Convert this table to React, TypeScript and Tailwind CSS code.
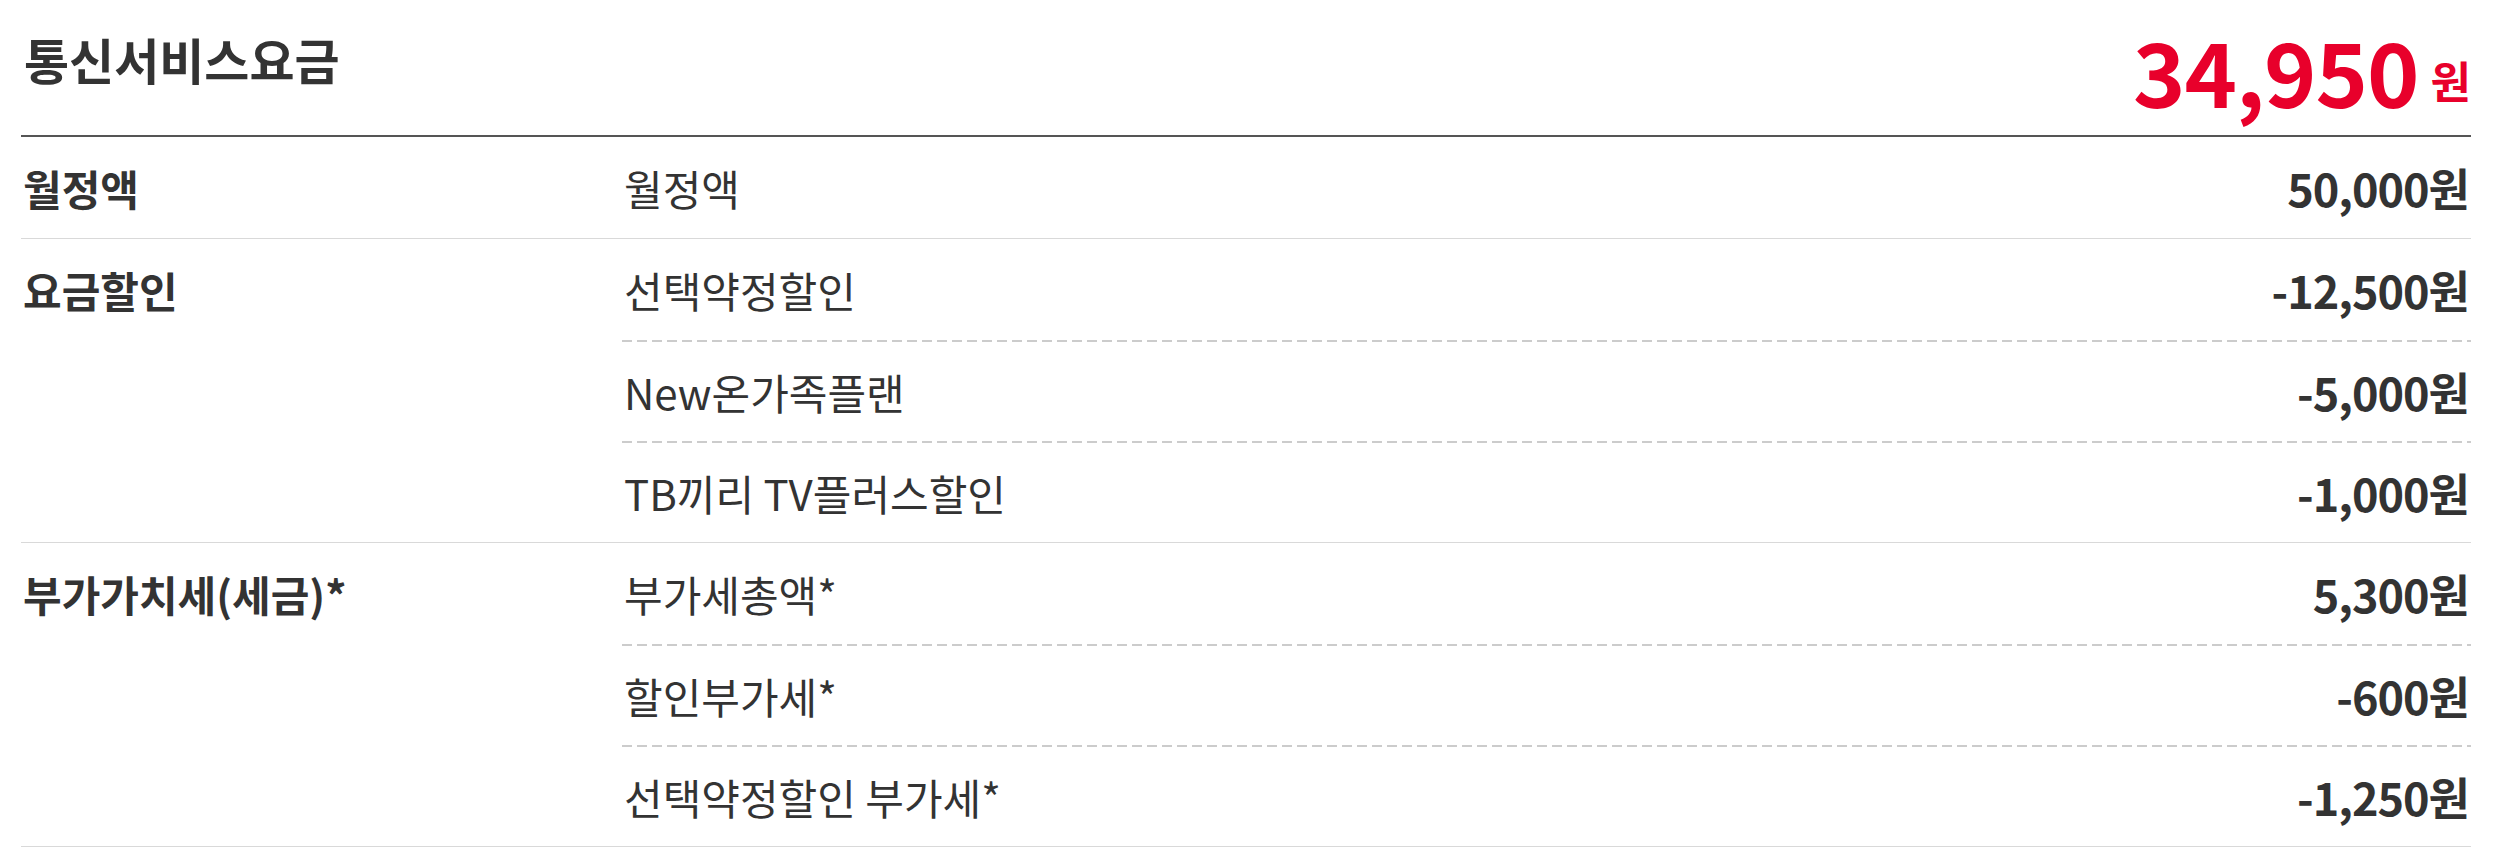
import React from 'react'

type Item = { name: string; amount: string }
type Group = { label: string; items: Item[] }

const groups: Group[] = [
  { label: '월정액', items: [{ name: '월정액', amount: '50,000원' }] },
  {
    label: '요금할인',
    items: [
      { name: '선택약정할인', amount: '-12,500원' },
      { name: 'New온가족플랜', amount: '-5,000원' },
      { name: 'TB끼리 TV플러스할인', amount: '-1,000원' },
    ],
  },
  {
    label: '부가가치세(세금)*',
    items: [
      { name: '부가세총액*', amount: '5,300원' },
      { name: '할인부가세*', amount: '-600원' },
      { name: '선택약정할인 부가세*', amount: '-1,250원' },
    ],
  },
]

function Dashed() {
  return (
    <div className="h-[2px] bg-[linear-gradient(to_right,#cccccc_10px,transparent_10px)] bg-[length:15px_2px] bg-repeat-x" />
  )
}

function FeeGroup({ group }: { group: Group }) {
  return (
    <div className="flex border-b border-[#d9d9d9]">
      <div className="w-[601px] h-[101px] flex items-center pl-[2px] text-[42px] font-bold leading-none">
        {group.label}
      </div>
      <div className="flex-1">
        {group.items.map((item, i) => (
          <div key={item.name}>
            {i > 0 && <Dashed />}
            <div
              className={`flex items-center justify-between ${i === 0 ? 'h-[101px]' : 'h-[99px]'}`}
            >
              <span className="pl-[2px] text-[42px] leading-none">{item.name}</span>
              <span className="pr-[2px] text-[45px] font-bold leading-none tracking-[-1px]">
                {item.amount}
              </span>
            </div>
          </div>
        ))}
      </div>
    </div>
  )
}

export default function App() {
  return (
    <div className="min-h-screen bg-white font-['Noto_Sans_CJK_KR',sans-serif] text-[#333333]">
      <div className="ml-[21px] w-[2450px]">
        <div className="flex justify-between h-[137px] border-b-2 border-[#555555]">
          <h2 className="pt-[34px] pl-[3px] text-[49px] font-bold leading-none">
            통신서비스요금
          </h2>
          <div className="flex items-end pb-[21px] text-[#e8002b] font-bold leading-none">
            <span className="text-[89px] tracking-[-1px]">34,950</span>
            <span className="ml-[12px] mb-[12px] text-[44px]">원</span>
          </div>
        </div>
        {groups.map((g) => (
          <FeeGroup key={g.label} group={g} />
        ))}
      </div>
    </div>
  )
}
